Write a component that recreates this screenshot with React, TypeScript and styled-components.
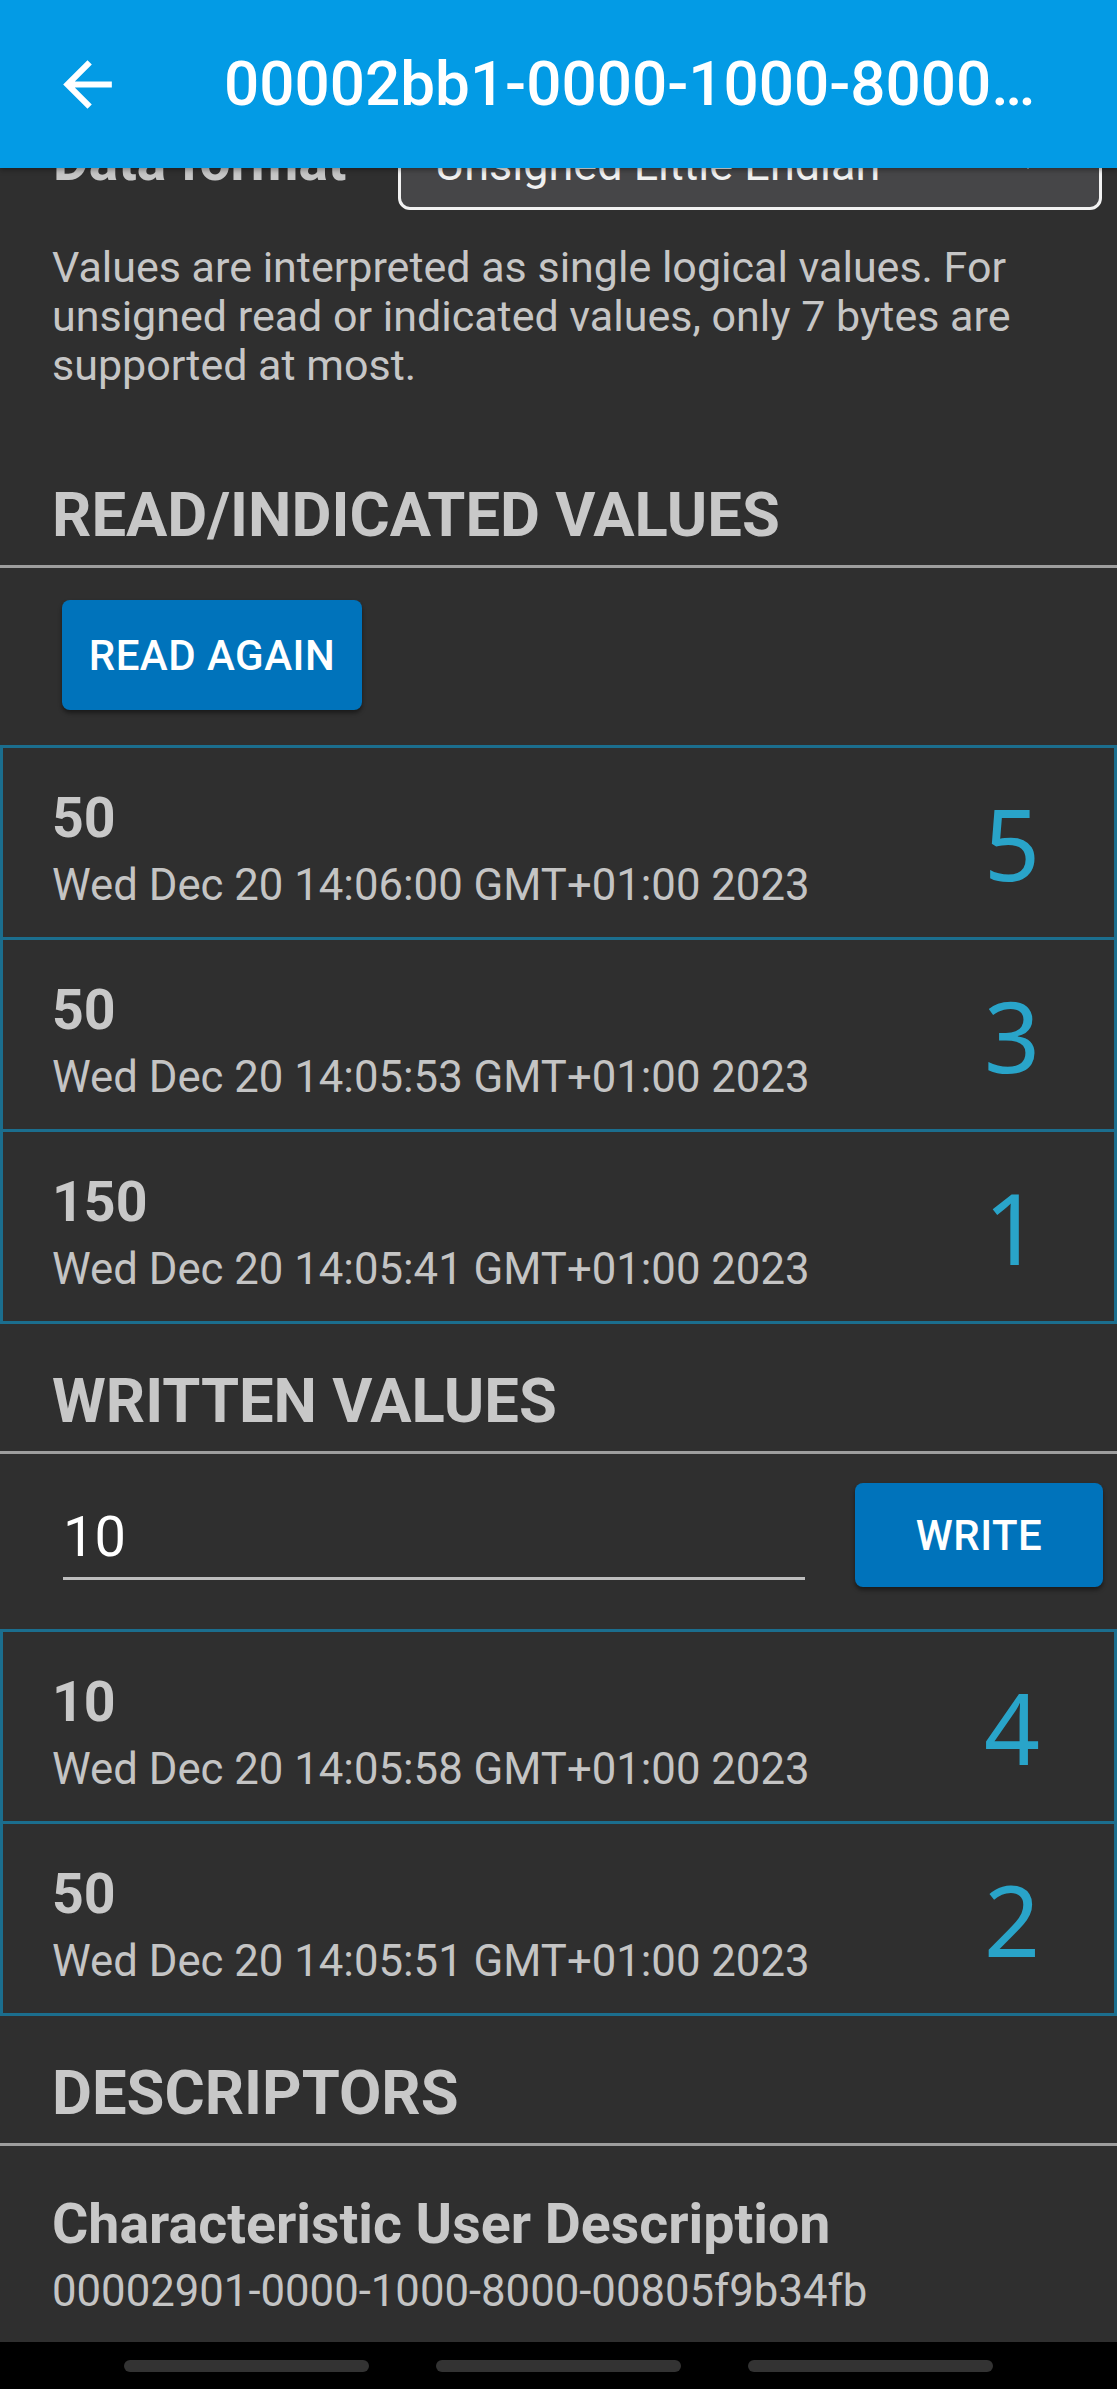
import React from 'react';
import styled, { createGlobalStyle } from 'styled-components';

const GlobalStyle = createGlobalStyle`
  html, body { margin: 0; padding: 0; background: #2f2f2f; }
  body { font-family: Roboto, "Noto Sans", "Liberation Sans", sans-serif; }
  * { box-sizing: border-box; }
`;

const Screen = styled.div`
  position: relative;
  width: 1117px;
  height: 2389px;
  display: flex;
  flex-direction: column;
  background: #2f2f2f;
  color: #c6c6c6;
  overflow: hidden;
`;

const AppBar = styled.header`
  position: absolute;
  top: 0;
  left: 0;
  right: 0;
  height: 168px;
  z-index: 2;
  display: flex;
  align-items: center;
  gap: 100px;
  padding: 0 40px 0 51px;
  background: #039be5;
  box-shadow: 0 2px 5px rgba(0, 0, 0, 0.35);
`;

const BackButton = styled.button`
  width: 73px;
  height: 73px;
  padding: 0;
  border: none;
  background: transparent;
  display: flex;
  align-items: center;
  justify-content: center;
  flex-shrink: 0;
`;

const Title = styled.h1`
  margin: 0;
  width: 828px;
  font-size: 62px;
  font-weight: 500;
  line-height: 74px;
  color: #ffffff;
  white-space: nowrap;
  overflow: hidden;
  text-overflow: ellipsis;
`;

const Content = styled.main`
  flex: 1;
  min-height: 0;
  overflow: hidden;
  padding-top: 90px;
  display: flex;
  flex-direction: column;
`;

const FieldRow = styled.div`
  display: flex;
  align-items: baseline;
  padding: 0 15px 0 53px;
`;

const FieldLabel = styled.span`
  flex: 1;
  font-size: 55px;
  font-weight: 700;
  line-height: 64px;
  color: #c6c6c6;
`;

const SelectBox = styled.div`
  position: relative;
  width: 704px;
  height: 120px;
  padding: 44px 0 0 34px;
  border: 3px solid #f2f2f2;
  border-radius: 12px;
  background: #464648;
  color: #f0f0f0;
  font-size: 45px;
  line-height: 56px;

  &::after {
    content: '';
    position: absolute;
    top: 62px;
    right: 57px;
    border-left: 14px solid transparent;
    border-right: 14px solid transparent;
    border-top: 14px solid #d0d0d0;
  }
`;

const Note = styled.p`
  margin: 33px 52px 0 52px;
  font-size: 43px;
  line-height: 49px;
  color: #c6c6c6;
`;

const SectionTitle = styled.h2<{ $gap: number }>`
  margin: ${(p) => p.$gap}px 0 0;
  padding: 0 52px;
  font-size: 61.5px;
  font-weight: 700;
  line-height: 70px;
  color: #c8c8c8;
`;

const Divider = styled.div`
  height: 3px;
  margin-top: 15px;
  background: #9e9e9e;
`;

const ActionRow = styled.div`
  display: flex;
  padding: 32px 0 35px 62px;
`;

const ActionButton = styled.button<{ $width: number; $height: number }>`
  width: ${(p) => p.$width}px;
  height: ${(p) => p.$height}px;
  flex-shrink: 0;
  padding: 0;
  border: none;
  border-radius: 8px;
  background: #0073bb;
  color: #ffffff;
  font-family: Roboto, "Noto Sans", sans-serif;
  font-size: 42px;
  font-weight: 500;
  letter-spacing: 0.5px;
  box-shadow: 0 3px 4px rgba(0, 0, 0, 0.45);
`;

const WriteRow = styled.div`
  display: flex;
  align-items: flex-start;
  gap: 50px;
  padding: 29px 14px 42px 63px;
`;

const ValueInput = styled.input`
  flex: 1;
  min-width: 0;
  height: 76px;
  margin-top: 21px;
  padding: 0 0 7px 0;
  border: none;
  border-bottom: 3px solid #bdbdbd;
  background: transparent;
  color: #ffffff;
  font-family: Roboto, "Noto Sans", sans-serif;
  font-size: 56px;
  line-height: 66px;
  outline: none;
`;

const ValueList = styled.div`
  display: flex;
  flex-direction: column;
  border-top: 3px solid #1b6e8e;
`;

const ValueItem = styled.div`
  height: 192px;
  display: flex;
  align-items: center;
  padding-left: 49px;
  border: 3px solid #1b6e8e;
  border-top: none;
`;

const ItemText = styled.div`
  flex: 1;
  display: flex;
  flex-direction: column;
  padding: 39px 0 27px;
`;

const ItemValue = styled.div`
  font-size: 55.5px;
  font-weight: 700;
  line-height: 64px;
  color: #c8c8c8;
`;

const ItemDate = styled.div`
  margin-top: 9px;
  font-size: 43.7px;
  line-height: 50px;
  color: #c4c4c4;
`;

const ItemOrder = styled.div`
  padding-right: 74px;
  font-family: "Noto Sans", "Open Sans", sans-serif;
  font-size: 98px;
  line-height: 1;
  color: #29a4c9;
`;

const Descriptor = styled.div`
  display: flex;
  flex-direction: column;
  padding: 47px 52px 0;
`;

const NavBar = styled.nav`
  height: 47px;
  flex-shrink: 0;
  display: flex;
  justify-content: center;
  align-items: flex-start;
  gap: 67px;
  padding-top: 18px;
  background: #000000;
`;

const NavPill = styled.span`
  width: 245px;
  height: 12px;
  border-radius: 6px;
  background: #333333;
`;

type Entry = { value: string; date: string; order: number };

const readValues: Entry[] = [
  { value: '50', date: 'Wed Dec 20 14:06:00 GMT+01:00 2023', order: 5 },
  { value: '50', date: 'Wed Dec 20 14:05:53 GMT+01:00 2023', order: 3 },
  { value: '150', date: 'Wed Dec 20 14:05:41 GMT+01:00 2023', order: 1 },
];

const writtenValues: Entry[] = [
  { value: '10', date: 'Wed Dec 20 14:05:58 GMT+01:00 2023', order: 4 },
  { value: '50', date: 'Wed Dec 20 14:05:51 GMT+01:00 2023', order: 2 },
];

const EntryList = ({ entries }: { entries: Entry[] }) => (
  <ValueList>
    {entries.map((e, i) => (
      <ValueItem key={i}>
        <ItemText>
          <ItemValue>{e.value}</ItemValue>
          <ItemDate>{e.date}</ItemDate>
        </ItemText>
        <ItemOrder>{e.order}</ItemOrder>
      </ValueItem>
    ))}
  </ValueList>
);

export default function App() {
  return (
    <>
      <GlobalStyle />
      <Screen>
        <AppBar>
          <BackButton aria-label="Back">
            <svg width="73" height="73" viewBox="0 0 24 24" fill="#ffffff">
              <path d="M20 11H7.83l5.59-5.59L12 4l-8 8 8 8 1.41-1.41L7.83 13H20v-2z" />
            </svg>
          </BackButton>
          <Title>00002bb1-0000-1000-8000-00805f9b34fb</Title>
        </AppBar>
        <Content>
          <FieldRow>
            <FieldLabel>Data format</FieldLabel>
            <SelectBox>Unsigned Little Endian</SelectBox>
          </FieldRow>
          <Note>
            Values are interpreted as single logical values. For unsigned read or indicated values,
            only 7 bytes are supported at most.
          </Note>

          <SectionTitle $gap={90}>READ/INDICATED VALUES</SectionTitle>
          <Divider />
          <ActionRow>
            <ActionButton $width={300} $height={110}>READ AGAIN</ActionButton>
          </ActionRow>
          <EntryList entries={readValues} />

          <SectionTitle $gap={42}>WRITTEN VALUES</SectionTitle>
          <Divider />
          <WriteRow>
            <ValueInput defaultValue="10" />
            <ActionButton $width={248} $height={104}>WRITE</ActionButton>
          </WriteRow>
          <EntryList entries={writtenValues} />

          <SectionTitle $gap={42}>DESCRIPTORS</SectionTitle>
          <Divider />
          <Descriptor>
            <ItemValue>Characteristic User Description</ItemValue>
            <ItemDate>00002901-0000-1000-8000-00805f9b34fb</ItemDate>
          </Descriptor>
        </Content>
        <NavBar>
          <NavPill />
          <NavPill />
          <NavPill />
        </NavBar>
      </Screen>
    </>
  );
}
